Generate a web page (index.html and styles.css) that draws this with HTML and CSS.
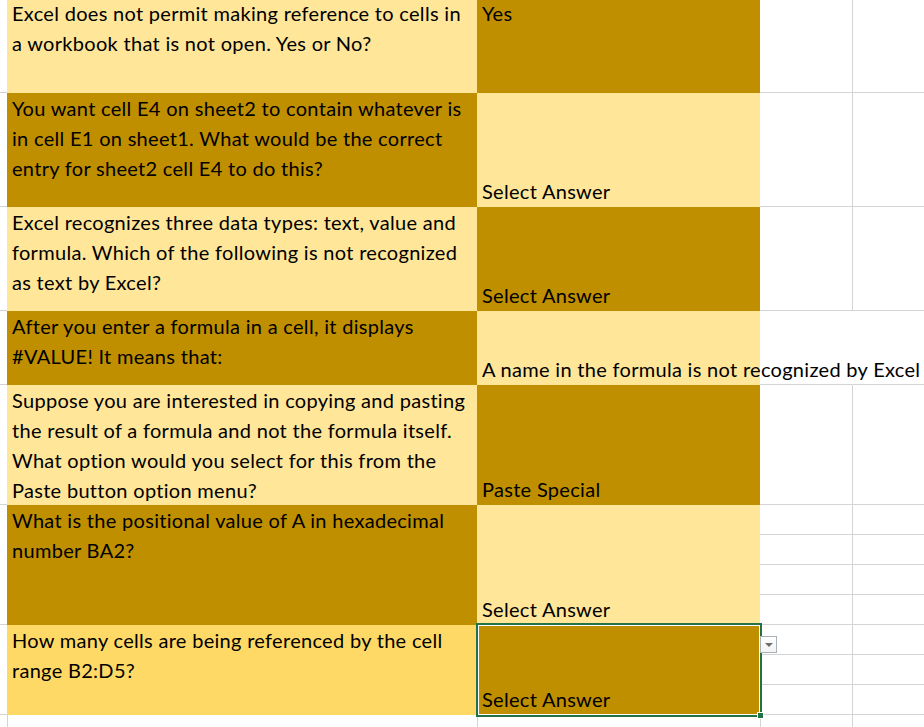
FILE: index.html
```html
<!DOCTYPE html>
<html>
<head>
<meta charset="utf-8">
<link rel="stylesheet" href="styles.css">
</head>
<body>
<div class="sheet">
  <div class="row r1">
    <div class="gut"></div>
    <div class="cell q light">Excel does not permit making reference to cells in<br>a workbook that is not open. Yes or No?</div>
    <div class="cell a dark top">Yes</div>
    <div class="c"></div>
    <div class="d"></div>
  </div>
  <div class="row r2">
    <div class="gut"></div>
    <div class="cell q dark">You want cell E4 on sheet2 to contain whatever is<br>in cell E1 on sheet1. What would be the correct<br>entry for sheet2 cell E4 to do this?</div>
    <div class="cell a light">Select Answer</div>
    <div class="c"></div>
    <div class="d"></div>
  </div>
  <div class="row r3">
    <div class="gut"></div>
    <div class="cell q light">Excel recognizes three data types: text, value and<br>formula. Which of the following is not recognized<br>as text by Excel?</div>
    <div class="cell a dark">Select Answer</div>
    <div class="c"></div>
    <div class="d"></div>
  </div>
  <div class="row r4">
    <div class="gut"></div>
    <div class="cell q dark">After you enter a formula in a cell, it displays<br>#VALUE! It means that:</div>
    <div class="cell a light overflow">A name in the formula is not recognized by Excel</div>
    <div class="c open"></div>
    <div class="d"></div>
  </div>
  <div class="row r5">
    <div class="gut"></div>
    <div class="cell q light">Suppose you are interested in copying and pasting<br>the result of a formula and not the formula itself.<br>What option would you select for this from the<br>Paste button option menu?</div>
    <div class="cell a dark">Paste Special</div>
    <div class="c"></div>
    <div class="d"></div>
  </div>
  <div class="row r6">
    <div class="gut"></div>
    <div class="cell q dark">What is the positional value of A in hexadecimal<br>number BA2?</div>
    <div class="cell a light">Select Answer</div>
    <div class="c stack"><div class="sub"></div><div class="sub"></div><div class="sub"></div><div class="sub"></div></div>
    <div class="d stack"><div class="sub"></div><div class="sub"></div><div class="sub"></div><div class="sub"></div></div>
  </div>
  <div class="row r7">
    <div class="gut"></div>
    <div class="cell q gold">How many cells are being referenced by the cell<br>range B2:D5?</div>
    <div class="cell a dark selected">Select Answer
      <div class="sel"><div class="handle"></div></div>
      <div class="dropdown"><span class="tri"></span></div>
    </div>
    <div class="c stack"><div class="sub"></div><div class="sub"></div><div class="sub"></div></div>
    <div class="d stack"><div class="sub"></div><div class="sub"></div><div class="sub"></div></div>
  </div>
  <div class="row filler">
    <div class="gut"></div>
    <div class="fa"></div>
    <div class="fb"></div>
    <div class="fc"></div>
    <div class="fd"></div>
  </div>
</div>
</body>
</html>
```
FILE: styles.css
```css
* { box-sizing: border-box; }
html, body { margin: 0; padding: 0; background: #fff; }
body {
  width: 924px;
  height: 727px;
  overflow: hidden;
  font-family: "Lato", "Liberation Sans", sans-serif;
  font-size: 20px;
  letter-spacing: 0.3px;
  color: #000;
}
.sheet { display: flex; flex-direction: column; margin-top: -2px; }
.row { display: flex; flex: none; }
.r1 { height: 95px; }
.r2 { height: 114px; }
.r3 { height: 104px; }
.r4 { height: 74px; }
.r5 { height: 120px; }
.r6 { height: 120px; }
.r7 { height: 90px; }
.filler { height: 20px; }

.gut { width: 7px; flex: none; border-bottom: 1px solid #d4d4d4; }
.cell {
  flex: none;
  line-height: 30px;
  padding-left: 5px;
  white-space: nowrap;
}
.q { width: 470px; }
.a {
  width: 283px;
  display: flex;
  align-items: flex-end;
  position: relative;
  padding-bottom: 1px;
}
.a.top { align-items: flex-start; padding-bottom: 0; }
.light { background: #ffe699; }
.dark { background: #bf8f00; }
.gold { background: #ffd966; }

.c {
  width: 93px;
  flex: none;
  border-bottom: 1px solid #d4d4d4;
  border-right: 1px solid #d4d4d4;
}
.c.open { border-right-color: transparent; }
.d { flex: 1; border-bottom: 1px solid #d4d4d4; }
.stack { display: flex; flex-direction: column; border-bottom: none; }
.sub { height: 30px; flex: none; border-bottom: 1px solid #d4d4d4; }

.filler .fa { width: 470px; border-left: 1px solid #d4d4d4; }
.filler .fb { width: 283px; border-left: 1px solid #d4d4d4; }
.filler .fc { width: 93px; border-left: 1px solid #d4d4d4; border-right: 1px solid #d4d4d4; }
.filler .gut { border-bottom: none; }

.sel {
  position: absolute;
  left: -1px;
  top: -2px;
  right: -2px;
  bottom: -2px;
  border: 2px solid #217346;
  box-shadow: inset 0 0 0 1px #ffffff;
  pointer-events: none;
}
.handle {
  position: absolute;
  right: -4px;
  bottom: -4px;
  width: 7px;
  height: 7px;
  background: #217346;
  border: 1px solid #ffffff;
}
.dropdown {
  position: absolute;
  left: 283px;
  top: 11px;
  width: 17px;
  height: 17px;
  background: linear-gradient(#ffffff, #f3f3f3);
  border: 1px solid #a9b0b8;
  display: flex;
  align-items: center;
  justify-content: center;
}
.tri {
  width: 0;
  height: 0;
  border-left: 4px solid transparent;
  border-right: 4px solid transparent;
  border-top: 4px solid #6d6d6d;
  margin-top: 1px;
}
```
